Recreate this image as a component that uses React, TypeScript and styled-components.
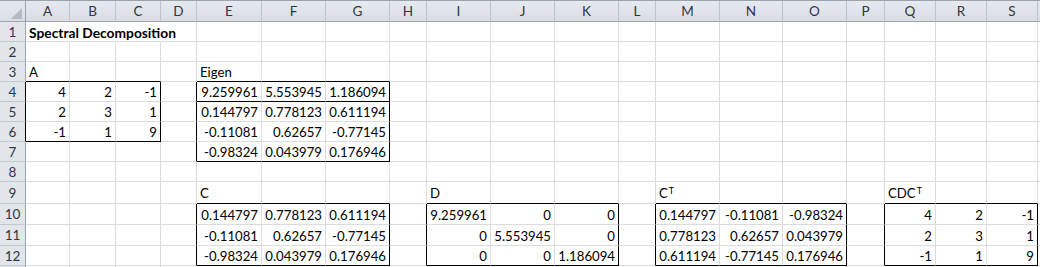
import React from 'react'
import styled, { createGlobalStyle } from 'styled-components'

/**
 * Sheet layout
 */
const COL_WIDTHS = [44, 46, 45, 36, 65, 64, 64, 37, 64, 64, 64, 37, 64, 63, 64, 38, 51, 51, 51, 60]
const ROW_HEIGHTS = [20, 20, 20, 20, 20, 20, 20, 20, 22, 21, 21, 20, 20]
const LETTERS = 'ABCDEFGHIJKLMNOPQRST'.split('')
// only a sliver of the last column and row is on screen, so they carry no label
const LAST_COL = LETTERS.length
const LAST_ROW = ROW_HEIGHTS.length

const GRID = '#dadcdd'
const INK = '#000'

type Box = { c1: number; r1: number; c2: number; r2: number; splitAfter?: number }

// ranges drawn with a thin black outline (1-based column / row)
const BOXES: Box[] = [
  { c1: 1, r1: 4, c2: 3, r2: 6 },
  { c1: 5, r1: 4, c2: 7, r2: 7, splitAfter: 4 },
  { c1: 5, r1: 10, c2: 7, r2: 12 },
  { c1: 9, r1: 10, c2: 11, r2: 12 },
  { c1: 13, r1: 10, c2: 15, r2: 12 },
  { c1: 17, r1: 10, c2: 19, r2: 12 },
]

type Value = string | { text: string; sup: string }

const matrixRows = (col: number, row: number, rows: string[][]) => {
  const out: Record<string, Value> = {}
  rows.forEach((r, i) =>
    r.forEach((v, j) => {
      out[`${LETTERS[col - 1 + j]}${row + i}`] = v
    })
  )
  return out
}

const CELLS: Record<string, Value> = {
  A3: 'A',
  E3: 'Eigen',
  E9: 'C',
  I9: 'D',
  M9: { text: 'C', sup: 'T' },
  Q9: { text: 'CDC', sup: 'T' },
  ...matrixRows(1, 4, [
    ['4', '2', '-1'],
    ['2', '3', '1'],
    ['-1', '1', '9'],
  ]),
  ...matrixRows(5, 4, [
    ['9.259961', '5.553945', '1.186094'],
    ['0.144797', '0.778123', '0.611194'],
    ['-0.11081', '0.62657', '-0.77145'],
    ['-0.98324', '0.043979', '0.176946'],
  ]),
  ...matrixRows(5, 10, [
    ['0.144797', '0.778123', '0.611194'],
    ['-0.11081', '0.62657', '-0.77145'],
    ['-0.98324', '0.043979', '0.176946'],
  ]),
  ...matrixRows(9, 10, [
    ['9.259961', '0', '0'],
    ['0', '5.553945', '0'],
    ['0', '0', '1.186094'],
  ]),
  ...matrixRows(13, 10, [
    ['0.144797', '-0.11081', '-0.98324'],
    ['0.778123', '0.62657', '0.043979'],
    ['0.611194', '-0.77145', '0.176946'],
  ]),
  ...matrixRows(17, 10, [
    ['4', '2', '-1'],
    ['2', '3', '1'],
    ['-1', '1', '9'],
  ]),
}

const inBox = (c: number, r: number) => BOXES.find((b) => c >= b.c1 && c <= b.c2 && r >= b.r1 && r <= b.r2)

const rightEdge = (c: number, r: number) => {
  const here = inBox(c, r)
  const next = inBox(c + 1, r)
  return (here && here.c2 === c) || (next && next.c1 === c + 1)
}

const bottomEdge = (c: number, r: number) => {
  const here = inBox(c, r)
  const below = inBox(c, r + 1)
  return (here && (here.r2 === r || here.splitAfter === r)) || (below && below.r1 === r + 1)
}

/**
 * Components styles
 */
const GlobalStyle = createGlobalStyle`
  html, body {
    margin: 0;
    background: #fff;
    overflow: hidden;
  }
`

const Sheet = styled.div`
  width: 1040px;
  height: 267px;
  overflow: hidden;
  display: grid;
  grid-template-columns: 26px ${COL_WIDTHS.map((w) => `${w}px`).join(' ')};
  grid-template-rows: 21px ${ROW_HEIGHTS.map((h) => `${h}px`).join(' ')};
  font-family: Lato, 'Liberation Sans', sans-serif;
  font-size: 13.2px;
  color: #000;
  border-top: 1px solid #9aa3ad;
  box-sizing: border-box;
`

const HeaderCell = styled.div<{ $dark?: boolean }>`
  background: linear-gradient(#e6e9ee, #dadee4);
  border-right: 1px solid ${(p) => (p.$dark ? '#9ea7b1' : '#bcc3cb')};
  border-bottom: 1px solid #9ea7b1;
  display: flex;
  align-items: center;
  justify-content: center;
  color: #2e3846;
  font-size: 13.5px;
  box-sizing: border-box;
`

const Corner = styled(HeaderCell)`
  align-items: flex-end;
  justify-content: flex-end;
  padding: 0 3px 2px 0;
  border-right-color: #9ea7b1;
`

const RowNumber = styled.div<{ $edge?: boolean }>`
  background: #e2e5ea;
  border-right: 1px solid ${(p) => (p.$edge ? INK : '#9ea7b1')};
  border-bottom: 1px solid #c3c9d0;
  display: flex;
  align-items: center;
  justify-content: center;
  color: #2e3846;
  font-size: 13.5px;
  box-sizing: border-box;
`

const Cell = styled.div<{ $right?: 'ink' | 'none'; $bottom?: boolean; $number?: boolean }>`
  border-right: 1px solid
    ${(p) => (p.$right === 'ink' ? INK : p.$right === 'none' ? '#fff' : GRID)};
  border-bottom: 1px solid ${(p) => (p.$bottom ? INK : GRID)};
  box-sizing: border-box;
  display: flex;
  align-items: center;
  justify-content: ${(p) => (p.$number ? 'flex-end' : 'flex-start')};
  padding: 1px 3px 0 3px;
  white-space: nowrap;
  overflow: visible;
`

const Title = styled.span`
  position: relative;
  z-index: 1;
  font-weight: 700;
  font-size: 13.8px;
`

const Sup = styled.sup`
  font-size: 9px;
  line-height: 0;
  position: relative;
  top: -2px;
  margin-left: 1px;
`

const isNumber = (v: Value) => typeof v === 'string' && /^-?\d+(\.\d+)?$/.test(v)

export default function App() {
  return (
    <>
      <GlobalStyle />
      <Sheet>
        <Corner>
          <svg width="11" height="11" viewBox="0 0 11 11">
            <polygon points="11,0 11,11 0,11" fill="#b4bac2" />
          </svg>
        </Corner>
        {LETTERS.map((l, i) => (
          <HeaderCell key={l}>{i + 1 === LAST_COL ? null : l}</HeaderCell>
        ))}
        {ROW_HEIGHTS.map((_, ri) => {
          const r = ri + 1
          return (
            <React.Fragment key={r}>
              <RowNumber $edge={rightEdge(0, r)}>{r === LAST_ROW ? null : r}</RowNumber>
              {LETTERS.map((l, ci) => {
                const c = ci + 1
                const v = CELLS[`${l}${r}`]
                // the title runs over B1 and C1, which hides their gridlines
                const overflowed = r === 1 && c <= 3
                return (
                  <Cell
                    key={l}
                    $right={rightEdge(c, r) ? 'ink' : overflowed ? 'none' : undefined}
                    $bottom={bottomEdge(c, r)}
                    $number={v !== undefined && isNumber(v)}
                  >
                    {r === 1 && c === 1 ? <Title>Spectral Decomposition</Title> : null}
                    {typeof v === 'string' ? v : null}
                    {v && typeof v === 'object' ? (
                      <>
                        {v.text}
                        <Sup>{v.sup}</Sup>
                      </>
                    ) : null}
                  </Cell>
                )
              })}
            </React.Fragment>
          )
        })}
      </Sheet>
    </>
  )
}
